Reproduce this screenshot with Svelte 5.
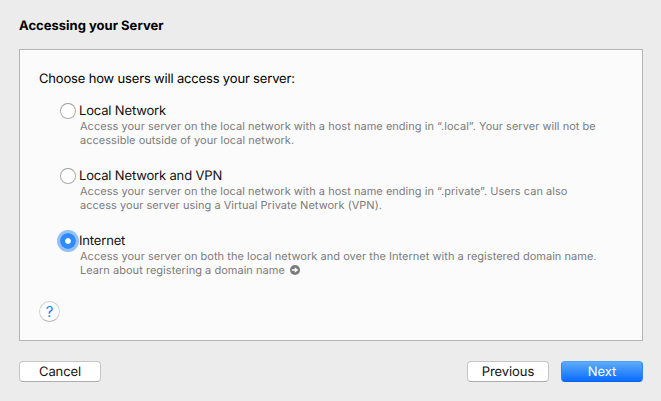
<script>
  let selected = $state('internet');

  const options = [
    {
      id: 'local',
      label: 'Local Network',
      lines: [
        { text: 'Access your server on the local network with a host name ending in “.local”. Your server will not be' },
        { text: 'accessible outside of your local network.' }
      ]
    },
    {
      id: 'vpn',
      label: 'Local Network and VPN',
      lines: [
        { text: 'Access your server on the local network with a host name ending in “.private”. Users can also' },
        { text: 'access your server using a Virtual Private Network (VPN).' }
      ]
    },
    {
      id: 'internet',
      label: 'Internet',
      lines: [
        { text: 'Access your server on both the local network and over the Internet with a registered domain name.' },
        { text: 'Learn about registering a domain name', link: true }
      ]
    }
  ];
</script>

<main class="assistant">
  <h1>Accessing your Server</h1>

  <section class="panel">
    <p class="prompt">Choose how users will access your server:</p>

    <div class="options" role="radiogroup">
      {#each options as option (option.id)}
        <div class="option">
          <button
            class="radio"
            class:on={selected === option.id}
            role="radio"
            aria-checked={selected === option.id}
            aria-label={option.label}
            onclick={() => (selected = option.id)}
          ></button>
          <div class="copy">
            <div class="label">{option.label}</div>
            {#each option.lines as line}
              <div class="line">
                <span>{line.text}</span>
                {#if line.link}
                  <svg class="go" viewBox="0 0 10 10" width="10" height="10">
                    <circle cx="5" cy="5" r="5" fill="#7b7b7b" />
                    <path d="M1.9 4.2H4.8V2.2L8.3 5L4.8 7.8V5.8H1.9Z" fill="#fff" />
                  </svg>
                {/if}
              </div>
            {/each}
          </div>
        </div>
      {/each}
    </div>

    <button class="help" aria-label="Help">?</button>
  </section>

  <footer>
    <button class="push">Cancel</button>
    <div class="spacer"></div>
    <button class="push">Previous</button>
    <button class="push primary">Next</button>
  </footer>
</main>

<style>
  :global(body) {
    margin: 0;
    background: #ececec;
  }

  .assistant {
    box-sizing: border-box;
    width: 661px;
    height: 401px;
    padding: 18px 18px 0 19px;
    background: #ececec;
    color: #000;
    font-family: Inter, 'Liberation Sans', sans-serif;
    font-size: 13px;
    line-height: 16px;
    white-space: nowrap;
    text-rendering: geometricPrecision;
  }

  button {
    box-sizing: border-box;
    margin: 0;
    padding: 0;
    font: inherit;
    color: inherit;
    text-rendering: inherit;
  }

  h1 {
    margin: 0 0 15px;
    font-size: 13px;
    font-weight: 700;
    letter-spacing: 0.01px;
  }

  .panel {
    box-sizing: border-box;
    height: 292px;
    padding: 21px 19px 0;
    border: 1px solid #b4b4b4;
    background: #fbfbfb;
  }

  .prompt {
    margin: 0 0 15px;
    letter-spacing: -0.17px;
  }

  .options {
    display: flex;
    flex-direction: column;
    gap: 19px;
    padding-left: 21px;
  }

  .option {
    display: flex;
    gap: 3px;
    height: 46px;
  }

  .radio {
    flex: none;
    width: 16px;
    height: 16px;
    margin-top: 1px;
    border: 1px solid #adadad;
    border-top-color: #9c9c9c;
    border-radius: 50%;
    background: #fff;
  }

  .radio.on {
    border: 0;
    background: radial-gradient(circle, #fff 2.4px, #2f8bfa 3.3px);
    box-shadow: 0 0 0 3px #93c0f8;
  }

  .label {
    height: 16px;
    padding-top: 1px;
    letter-spacing: -0.16px;
    color: #111;
  }

  .line {
    display: flex;
    align-items: center;
    gap: 5px;
    height: 14px;
    padding-left: 1px;
    font-size: 11px;
    line-height: 14px;
    letter-spacing: 0.03px;
    color: #7c7c7c;
  }

  .help {
    display: block;
    width: 21px;
    height: 21px;
    margin-top: 23px;
    border: 1px solid #d0d0d0;
    border-bottom-color: #b5b5b5;
    border-radius: 50%;
    background: #fff;
    color: #1a7dfa;
    font-size: 15px;
    line-height: 19px;
  }

  footer {
    display: flex;
    gap: 12px;
    margin-top: 20px;
  }

  .spacer {
    flex: 1;
  }

  .push {
    width: 82px;
    height: 21px;
    padding-top: 1px;
    border: 1px solid #c6c6c6;
    border-bottom-color: #adadad;
    border-radius: 4px;
    background: #fff;
    line-height: 18px;
    letter-spacing: -0.1px;
    color: #111;
  }

  .primary {
    border-color: #4ba0f8 #2d85f5 #0a62e8;
    background: linear-gradient(#5eabf9, #0a6dff);
    color: #fff;
  }
</style>
